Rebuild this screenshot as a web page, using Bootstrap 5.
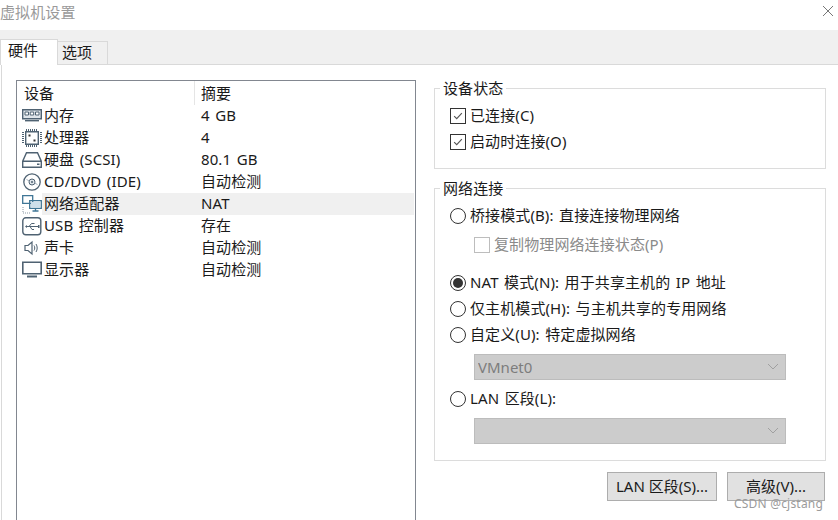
<!DOCTYPE html>
<html lang="zh-CN">
<head>
  <meta charset="UTF-8" />
  <title>虚拟机设置</title>
  <link href="https://cdn.jsdelivr.net/npm/bootstrap@5.3.0/dist/css/bootstrap.min.css" rel="stylesheet" />
  <style>
    html, body { height: 520px; overflow: hidden; }
    body {
      width: 838px;
      background: #fff;
      color: #1a1a1a;
      font: 15px/20px "Noto Sans", "Noto Sans CJK SC", sans-serif;
      letter-spacing: .1px;
      word-spacing: 1.5px;
      position: relative;
    }
    .win-title { height: 30px; color: #9a9a9a; line-height: 24px; }
    .win-close { position: absolute; right: 3px; top: 4px; }
    .tab-band { height: 35px; background: #f0f0f0; border-bottom: 1px solid #d9d9d9; }
    .tab-item { background: #f0f0f0; border: 1px solid #d9d9d9; border-bottom: 0; height: 23px; width: 51px; line-height: 20px; padding-left: 4px; margin-left: -1px; }
    .tab-item.on { background: #fff; height: 26px; width: 58px; margin-left: 0; margin-bottom: -1px; padding-left: 7px; position: relative; }
    .page-body { height: 455px; margin-left: 1px; border-left: 1px solid #d9d9d9; padding: 15px 12px 0 14px; gap: 18px; }
    .dev-list { width: 400px; height: 460px; flex: none; border: 1px solid #828790; border-bottom: 0; }
    .dev-head { height: 24px; padding-left: 7px; line-height: 24px; }
    .dev-head .c1 { width: 171px; height: 24px; border-right: 1px solid #e5e5e5; flex: none; }
    .dev-head .c2 { padding-left: 6px; }
    .dev-row { height: 22px; }
    .dev-ico { width: 25px; height: 22px; flex: none; padding: 2px 0 0 5px; }
    .dev-ico svg { display: block; }
    .dev-cell { flex: 1; display: flex; padding-left: 2px; margin-right: 1px; }
    .dev-name { width: 157px; flex: none; }
    .dev-row.sel .dev-cell { background: #f0f0f0; }
    .side-col { width: 392px; flex: none; }
    .grp { border: 1px solid #dcdcdc; position: relative; padding-left: 15px; }
    .grp-top { height: 81px; margin-top: 8px; padding-top: 14px; }
    .grp-net { height: 273px; margin-top: 19px; padding-top: 14px; }
    .grp-label { position: absolute; left: 5px; top: -11px; background: #fff; padding: 0 3px; }
    .form-check { min-height: 0; padding-left: 0; margin: 0; display: flex; align-items: center; height: 26px; gap: 4px; }
    .form-check .form-check-input { float: none; margin: 0; width: 16px; height: 16px; flex: none; background-color: #fff; box-shadow: none; opacity: 1; }
    .form-check-label { opacity: 1 !important; color: inherit; cursor: default; margin-top: -2px; }
    .form-check-input[type=checkbox] { border: 1px solid #333; border-radius: 0; }
    .form-check-input[type=checkbox]:checked { background-color: #fff; border-color: #333; background-size: 12px; background-image: url("data:image/svg+xml,%3csvg xmlns='http://www.w3.org/2000/svg' viewBox='0 0 14 14'%3e%3cpath fill='none' stroke='%23555' stroke-width='1.3' d='M2.5 7.2l3 3 6-6.6'/%3e%3c/svg%3e"); }
    .form-check-input[type=checkbox]:disabled { border-color: #bdbdbd; }
    .form-check-input[type=radio] { border: 1px solid #333; }
    .form-check-input[type=radio]:checked { background-color: #fff; border-color: #333; background-size: 16px; background-image: url("data:image/svg+xml,%3csvg xmlns='http://www.w3.org/2000/svg' viewBox='0 0 16 16'%3e%3ccircle cx='8' cy='8' r='5' fill='%23333'/%3e%3c/svg%3e"); }
    .sub-check { margin-left: 24px; height: 26px; color: #8a8a8a; margin-top: 3px; }
    .gap-nat { margin-top: 12px; }
    .form-select.vm-select, .form-select.vm-select:disabled {
      width: 312px; height: 26px; margin: 6px 0 6px 24px; padding: 0 0 0 3px; border: 1px solid #bcbcbc; border-radius: 0;
      background-color: #cccccc; color: #7d7d7d; font: inherit; line-height: 22px; opacity: 1; box-shadow: none; background-position: right 5px center; background-size: 14px 10px;
      background-image: url("data:image/svg+xml,%3csvg xmlns='http://www.w3.org/2000/svg' viewBox='0 0 14 10'%3e%3cpath fill='none' stroke='%23a0a0a0' d='M2 2l5 5 5-5'/%3e%3c/svg%3e");
    }
    .act-row { margin-top: 11px; gap: 10px; padding-right: 1px; }
    .act-btn { height: 29px; padding: 0 0 2px; border: 1px solid #adadad; border-radius: 0; background: #e1e1e1; color: #1a1a1a; font: inherit; line-height: 24px; }
    .act-lan { width: 110px; }
    .act-adv { width: 98px; }
    .wmark { position: absolute; left: 734px; top: 495px; color: #9b9b9b; font: 12px/18px "Noto Sans", sans-serif; letter-spacing: .2px; word-spacing: 0; }
  </style>
</head>
<body>
  <div class="win-title">虚拟机设置</div>
  <svg class="win-close" width="14" height="14" viewBox="0 0 14 14"><path fill="none" stroke="#777" d="M2 2l10 10M12 2L2 12"/></svg>

  <div class="tab-band d-flex align-items-end">
    <div class="tab-item on">硬件</div>
    <div class="tab-item">选项</div>
  </div>

  <div class="page-body d-flex">
    <div class="dev-list">
      <div class="dev-head d-flex">
        <div class="c1">设备</div>
        <div class="c2">摘要</div>
      </div>
      <div class="dev-row d-flex">
        <div class="dev-ico"><svg width="20" height="16" viewBox="0 0 20 16"><path fill="#dfe5ea" stroke="#4f6272" stroke-width="1.4" d="M.7 2.700h18.600v9H.7z"/><path fill="#fff" stroke="#4f6272" d="M3 5h3.500v3H3zM8.200 5h3.500v3H8.200zM13.500 5H17v3h-3.500z"/><path stroke="#4f6272" stroke-width="1.4" d="M3 13.700h14"/></svg></div>
        <div class="dev-cell"><span class="dev-name">内存</span><span>4 GB</span></div>
      </div>
      <div class="dev-row d-flex">
        <div class="dev-ico"><svg width="20" height="18" viewBox="0 0 20 18"><path fill="#fff" stroke="#4f6272" stroke-width="1.4" d="M3.700 2.700h12.600v12.600H3.700z"/><path fill="#333" d="M6.500 5.500h2v2h-2zM11.500 10.500h2v2h-2z"/><path stroke="#4f6272" stroke-dasharray="1 1" stroke-width="2" d="M4 1h12M4 17h12M1 3v12M19 3v12"/></svg></div>
        <div class="dev-cell"><span class="dev-name">处理器</span><span>4</span></div>
      </div>
      <div class="dev-row d-flex">
        <div class="dev-ico"><svg width="20" height="18" viewBox="0 0 20 18"><path fill="#fff" stroke="#4f6272" stroke-width="1.4" d="M4.500 1.700h11l3.800 8.500v6H.7v-6zM.7 10.200h18.600"/><path fill="#4f6272" d="M15 12.500h2.500v1.500H15z"/></svg></div>
        <div class="dev-cell"><span class="dev-name">硬盘 (SCSI)</span><span>80.1 GB</span></div>
      </div>
      <div class="dev-row d-flex">
        <div class="dev-ico"><svg width="20" height="18" viewBox="0 0 20 18"><circle cx="10" cy="9" r="8.200" fill="#fff" stroke="#4f6272" stroke-width="1.3"/><circle cx="10" cy="9" r="3" fill="#dfe5ea" stroke="#4f6272"/><circle cx="10" cy="9" r="1" fill="#4f6272"/><path fill="none" stroke="#a9b5bf" d="M4.500 6.500l3 1.500M12.500 10l3 1.500"/></svg></div>
        <div class="dev-cell"><span class="dev-name">CD/DVD (IDE)</span><span>自动检测</span></div>
      </div>
      <div class="dev-row sel d-flex">
        <div class="dev-ico"><svg width="20" height="20" viewBox="0 0 20 20"><path fill="#fff" stroke="#3f7696" stroke-width="1.3" d="M.7 .7h10v7.600H.7zM7.700 5.700h11.600v7.600H7.700z"/><path fill="#cfe0ea" d="M9 7h9v5H9z"/><path stroke="#3f7696" stroke-width="1.3" d="M13.500 13.500v2M10.500 16h6"/><path stroke="#8a98a4" stroke-dasharray="1 1" d="M1 12v5M1 18h7"/></svg></div>
        <div class="dev-cell"><span class="dev-name">网络适配器</span><span>NAT</span></div>
      </div>
      <div class="dev-row d-flex">
        <div class="dev-ico"><svg width="20" height="19" viewBox="0 0 20 19"><rect x=".8" y=".8" width="18" height="17" rx="3" fill="#fff" stroke="#4f6272" stroke-width="1.4"/><path fill="none" stroke="#4f6272" d="M4 9.500h12M7 9.500l2.500-3h3M8 9.500l2 3h2"/><path fill="#4f6272" d="M3 9.500l2-1.500v3zM16 8v3h1.500V8z"/></svg></div>
        <div class="dev-cell"><span class="dev-name">USB 控制器</span><span>存在</span></div>
      </div>
      <div class="dev-row d-flex">
        <div class="dev-ico"><svg width="20" height="18" viewBox="0 0 20 18"><path fill="#fff" stroke="#4f6272" stroke-width="1.2" d="M3 6.500h3L10 3v12L6 11.500H3z"/><path fill="none" stroke="#4f6272" d="M12 6.500c1 1.500 1 3.500 0 5M14 5c1.600 2.400 1.600 5.600 0 8"/></svg></div>
        <div class="dev-cell"><span class="dev-name">声卡</span><span>自动检测</span></div>
      </div>
      <div class="dev-row d-flex">
        <div class="dev-ico"><svg width="20" height="18" viewBox="0 0 20 18"><path fill="#fff" stroke="#4f6272" stroke-width="1.6" d="M.8 1.300h18.400v11.400H.8z"/><path stroke="#4f6272" stroke-width="2" d="M5 15.500h10"/></svg></div>
        <div class="dev-cell"><span class="dev-name">显示器</span><span>自动检测</span></div>
      </div>
    </div>

    <div class="side-col">
      <div class="grp grp-top">
        <div class="grp-label">设备状态</div>
        <div class="form-check">
          <input class="form-check-input" type="checkbox" id="c1" checked />
          <label class="form-check-label" for="c1">已连接(C)</label>
        </div>
        <div class="form-check">
          <input class="form-check-input" type="checkbox" id="c2" checked />
          <label class="form-check-label" for="c2">启动时连接(O)</label>
        </div>
      </div>

      <div class="grp grp-net">
        <div class="grp-label">网络连接</div>
        <div class="form-check">
          <input class="form-check-input" type="radio" name="net" id="r1" />
          <label class="form-check-label" for="r1">桥接模式(B): 直接连接物理网络</label>
        </div>
        <div class="form-check sub-check">
          <input class="form-check-input" type="checkbox" id="c3" disabled />
          <label class="form-check-label" for="c3">复制物理网络连接状态(P)</label>
        </div>
        <div class="form-check gap-nat">
          <input class="form-check-input" type="radio" name="net" id="r2" checked />
          <label class="form-check-label" for="r2">NAT 模式(N): 用于共享主机的 IP 地址</label>
        </div>
        <div class="form-check">
          <input class="form-check-input" type="radio" name="net" id="r3" />
          <label class="form-check-label" for="r3">仅主机模式(H): 与主机共享的专用网络</label>
        </div>
        <div class="form-check">
          <input class="form-check-input" type="radio" name="net" id="r4" />
          <label class="form-check-label" for="r4">自定义(U): 特定虚拟网络</label>
        </div>
        <select class="form-select vm-select" disabled><option>VMnet0</option></select>
        <div class="form-check">
          <input class="form-check-input" type="radio" name="net" id="r5" />
          <label class="form-check-label" for="r5">LAN 区段(L):</label>
        </div>
        <select class="form-select vm-select" disabled><option></option></select>
      </div>

      <div class="act-row d-flex justify-content-end">
        <button class="btn act-btn act-lan" type="button">LAN 区段(S)...</button>
        <button class="btn act-btn act-adv" type="button">高级(V)...</button>
      </div>
    </div>
  </div>

  <div class="wmark">CSDN @cjstang</div>
  <script src="https://cdn.jsdelivr.net/npm/bootstrap@5.3.0/dist/js/bootstrap.bundle.min.js"></script>
</body>
</html>
